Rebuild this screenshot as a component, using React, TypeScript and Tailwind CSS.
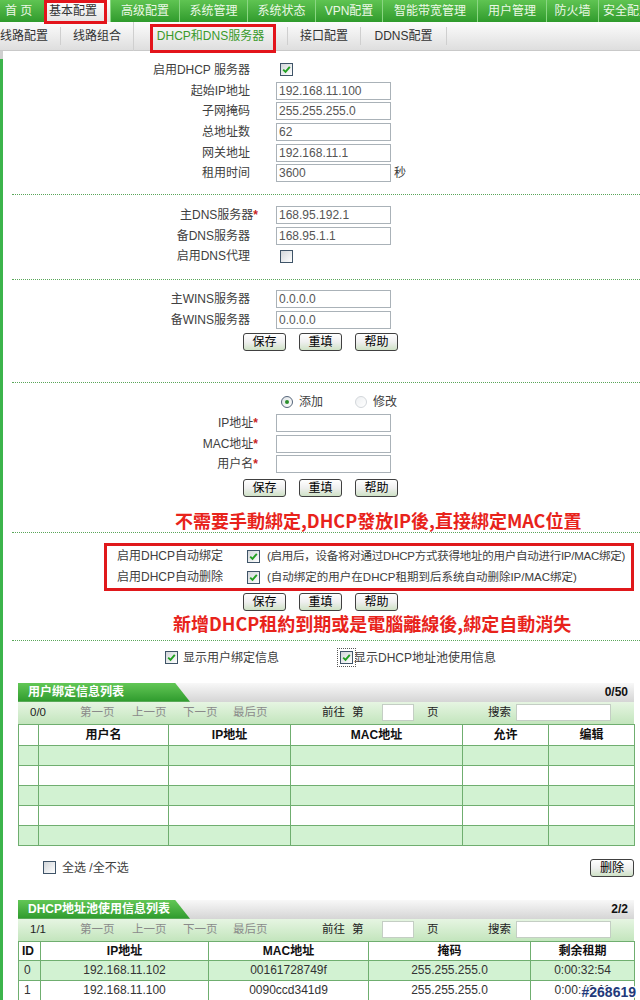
import React from "react";

function Check({ checked = true, focus = false }: { checked?: boolean; focus?: boolean }) {
  return (
    <span className={focus ? "inline-flex shrink-0 outline-1 outline-dotted outline-[#555] outline-offset-[2px]" : "inline-flex shrink-0"}>
      <span className="relative inline-block w-[13px] h-[13px] border border-[#3f5468] bg-linear-to-br from-[#d2d6da] to-white">
        {checked && (
          <svg className="absolute left-0 top-0" width="11" height="11" viewBox="0 0 11 11">
            <path d="M2.2 5.6 L4.5 7.9 L8.8 2.8" fill="none" stroke="#22a022" strokeWidth="1.9" />
          </svg>
        )}
      </span>
    </span>
  );
}

function Radio({ checked = false }: { checked?: boolean }) {
  return (
    <span
      className={
        checked
          ? "inline-flex shrink-0 items-center justify-center w-[12px] h-[12px] rounded-full border border-[#55657a] bg-linear-to-br from-[#dfe3e6] to-white"
          : "inline-flex shrink-0 items-center justify-center w-[12px] h-[12px] rounded-full border border-[#d3d7db] bg-linear-to-br from-[#eef0f2] to-white"
      }
    >
      {checked && <span className="w-[4px] h-[4px] rounded-full bg-[#2c8f2c]" />}
    </span>
  );
}

function Btn({ children, className = "" }: { children: React.ReactNode; className?: string }) {
  return (
    <span
      className={
        "inline-flex shrink-0 items-center justify-center w-[43px] h-[18px] border border-[#404040] rounded-[3px] bg-linear-to-b from-white via-[#efefef] to-[#cfe2c6] text-[12px] text-black leading-none " +
        className
      }
    >
      {children}
    </span>
  );
}

function Buttons({ className = "" }: { className?: string }) {
  return (
    <div className={"flex h-[18px] pl-[240px] gap-[13px] " + className}>
      <Btn>保存</Btn>
      <Btn>重填</Btn>
      <Btn>帮助</Btn>
    </div>
  );
}

function Box({ v = "" }: { v?: string }) {
  return (
    <div className="h-[18px] w-[115px] border border-[#aab2b8] bg-white px-[2px] text-[12px] leading-[16px] text-[#555] whitespace-nowrap">
      {v}
    </div>
  );
}

function Row({ label, star = false, children }: { label: string; star?: boolean; children?: React.ReactNode }) {
  return (
    <div className="flex items-center h-[20.7px]">
      <div className="w-[247px] shrink-0 text-right whitespace-nowrap text-[#404040]">
        {label}
        {star && <span className="text-[#c81e1e] font-bold mr-[-8px]">*</span>}
      </div>
      <div className="ml-[26px] flex items-center">{children}</div>
    </div>
  );
}

function Dots({ className = "" }: { className?: string }) {
  return <div className={"ml-[9px] border-t border-dotted border-[#5aa65a] " + className} />;
}

function TabHead({ title, count }: { title: string; count: string }) {
  return (
    <div className="flex h-[19px] bg-linear-to-b from-[#f8f8f8] to-[#d5d5d5]">
      <div className="w-[172px] shrink-0 bg-linear-to-b from-[#62c756] to-[#2c9a2c] [clip-path:polygon(0_0,157px_0,172px_100%,0_100%)] text-white font-bold text-[12px] pl-[10px] leading-[19px] whitespace-nowrap">
        {title}
      </div>
      <div className="ml-auto pr-[6px] font-bold text-[12px] leading-[19px] text-[#111]">{count}</div>
    </div>
  );
}

function Toolbar({ page }: { page: string }) {
  return (
    <div className="flex items-center h-[22px] bg-linear-to-b from-[#e6f5e2] to-[#c3e5bd] text-[11.5px] whitespace-nowrap">
      <span className="w-[62px] shrink-0 pl-[12px] text-[#222]">{page}</span>
      <span className="w-[52px] shrink-0 text-[#8a8a8a]">第一页</span>
      <span className="w-[51px] shrink-0 text-[#8a8a8a]">上一页</span>
      <span className="w-[50px] shrink-0 text-[#8a8a8a]">下一页</span>
      <span className="w-[89px] shrink-0 text-[#8a8a8a]">最后页</span>
      <span className="w-[30px] shrink-0 text-[#222]">前往</span>
      <span className="w-[30px] shrink-0 text-[#222]">第</span>
      <span className="w-[32px] h-[17px] shrink-0 bg-white border border-[#c4cec4]" />
      <span className="w-[13px] shrink-0" />
      <span className="w-[61px] shrink-0 text-[#222]">页</span>
      <span className="w-[28px] shrink-0 text-[#222]">搜索</span>
      <span className="w-[95px] h-[17px] shrink-0 bg-white border border-[#c4cec4]" />
    </div>
  );
}

const navItems: { t: string; w: string; sel?: boolean }[] = [
  { t: "首 页", w: "w-[44px] pl-[5px] text-left" },
  { t: "基本配置", w: "w-[66px] pl-[5px] text-left", sel: true },
  { t: "高级配置", w: "w-[69px] text-center" },
  { t: "系统管理", w: "w-[68px] text-center" },
  { t: "系统状态", w: "w-[68px] text-center" },
  { t: "VPN配置", w: "w-[67px] text-center" },
  { t: "智能带宽管理", w: "w-[95px] text-center" },
  { t: "用户管理", w: "w-[69px] text-center" },
  { t: "防火墙", w: "w-[52px] text-center" },
  { t: "安全配置", w: "w-[62px] pl-[4px] text-left" },
];

export default function App() {
  const td = "border border-[#6fae6f]";
  const th = "border border-[#6fae6f] font-bold text-[#111] text-center";
  return (
    <div className="relative w-[640px] h-[1000px] overflow-hidden bg-white font-['Liberation_Sans','Noto_Sans_CJK_SC',sans-serif] text-[12px] text-[#3a3a3a]">
      {/* top nav */}
      <div className="relative z-20 flex h-[22px] bg-linear-to-b from-[#5fc452] to-[#2f9b2c] whitespace-nowrap">
        {navItems.map((n, i) => (
          <div
            key={i}
            className={
              (n.sel
                ? "relative bg-linear-to-b from-white to-[#e4e4e4] text-[#333] "
                : "text-[#ecf8e6] " + (i > 0 ? "border-l border-[#8ad683] " : "")) +
              "shrink-0 h-[22px] leading-[22px] text-[12px] " +
              n.w
            }
          >
            {n.t}
            {n.sel && <span className="absolute left-0 top-0 w-[63px] h-[24px] border-[3px] border-[#e3141b]" />}
          </div>
        ))}
      </div>

      {/* sub nav */}
      <div className="relative z-10 flex h-[29px] items-center bg-linear-to-b from-[#fcfcfc] to-[#dedede] border-b border-[#c9c9c9] whitespace-nowrap text-[12px] text-[#333]">
        <div className="w-[60px] shrink-0 text-left">线路配置</div>
        <div className="w-[73px] shrink-0 text-center border-l border-[#cfcfcf]">线路组合</div>
        <div className="relative w-[154px] shrink-0 h-[29px] leading-[29px] text-center border-l border-[#cfcfcf] text-[#3a9a2a]">
          DHCP和DNS服务器
          <span className="absolute left-[16px] top-[2px] w-[126px] h-[29px] border-[3px] border-[#e3141b]" />
        </div>
        <div className="w-[73px] shrink-0 text-center border-l border-[#cfcfcf]">接口配置</div>
        <div className="w-[87px] shrink-0 text-center border-l border-r border-[#cfcfcf]">DDNS配置</div>
      </div>

      <div className="flex">
        <div className="w-[3px] shrink-0 flex flex-col">
          <div className="h-[8px] bg-[#cfcfcf]" />
          <div className="flex-1 bg-[#3cb44b]" />
        </div>

        <div className="flex-1 flex flex-col pt-[8.5px]">
          {/* section 1 */}
          <Row label="启用DHCP 服务器">
            <span className="ml-[4px] flex">
              <Check />
            </span>
          </Row>
          <Row label="起始IP地址">
            <Box v="192.168.11.100" />
          </Row>
          <Row label="子网掩码">
            <Box v="255.255.255.0" />
          </Row>
          <Row label="总地址数">
            <Box v="62" />
          </Row>
          <Row label="网关地址">
            <Box v="192.168.11.1" />
          </Row>
          <Row label="租用时间">
            <Box v="3600" />
            <span className="ml-[3px]">秒</span>
          </Row>

          <Dots className="mt-[10px]" />

          {/* section 2 */}
          <div className="mt-[10px]">
            <Row label="主DNS服务器" star>
              <Box v="168.95.192.1" />
            </Row>
            <Row label="备DNS服务器">
              <Box v="168.95.1.1" />
            </Row>
            <Row label="启用DNS代理">
              <span className="ml-[4px] flex">
                <Check checked={false} />
              </span>
            </Row>
          </div>

          <Dots className="mt-[12px]" />

          {/* section 3 */}
          <div className="mt-[9px]">
            <Row label="主WINS服务器">
              <Box v="0.0.0.0" />
            </Row>
            <Row label="备WINS服务器">
              <Box v="0.0.0.0" />
            </Row>
          </div>
          <Buttons className="mt-[3px]" />

          <Dots className="mt-[31px]" />

          {/* section 4 */}
          <div className="mt-[9px]">
            <Row label="">
              <span className="ml-[5px] flex items-center">
                <Radio checked />
                <span className="ml-[6px] text-[#404040]">添加</span>
                <span className="ml-[32px] flex">
                  <Radio />
                </span>
                <span className="ml-[6px] text-[#404040]">修改</span>
              </span>
            </Row>
            <Row label="IP地址" star>
              <Box />
            </Row>
            <Row label="MAC地址" star>
              <Box />
            </Row>
            <Row label="用户名" star>
              <Box />
            </Row>
          </div>
          <Buttons className="mt-[4px]" />

          <div className="mt-[11px] h-[24px] leading-[24px] ml-[172px] whitespace-nowrap font-['Noto_Sans_CJK_TC',sans-serif] font-bold text-[18px] text-[#e8231b]">
            不需要手動綁定,DHCP發放IP後,直接綁定MAC位置
          </div>
          <Dots />

          {/* auto bind red box */}
          <div className="mt-[10px] ml-[101px] w-[530px] border-[3px] border-[#e0181b] text-[#404040] whitespace-nowrap">
            <div className="flex items-center h-[21px]">
              <span className="ml-[10px] w-[130px] shrink-0">启用DHCP自动绑定</span>
              <Check />
              <span className="ml-[7px] text-[11.5px] tracking-[-0.25px]">(启用后，设备将对通过DHCP方式获得地址的用户自动进行IP/MAC绑定)</span>
            </div>
            <div className="flex items-center h-[21px]">
              <span className="ml-[10px] w-[130px] shrink-0">启用DHCP自动删除</span>
              <Check />
              <span className="ml-[7px] text-[11.5px]">(自动绑定的用户在DHCP租期到后系统自动删除IP/MAC绑定)</span>
            </div>
          </div>
          <Buttons className="mt-[2px]" />
          <div className="h-[24px] leading-[24px] ml-[170px] whitespace-nowrap font-['Noto_Sans_CJK_TC',sans-serif] font-bold text-[18px] text-[#e8231b]">
            新增DHCP租約到期或是電腦離線後,綁定自動消失
          </div>

          <Dots className="mt-[5px]" />

          {/* display options */}
          <div className="mt-[7px] flex items-center h-[20px] whitespace-nowrap text-[#404040]">
            <span className="ml-[162px] flex">
              <Check />
            </span>
            <span className="ml-[5px]">显示用户绑定信息</span>
            <span className="ml-[61px] flex">
              <Check focus />
            </span>
            <span className="ml-[1px]">显示DHCP地址池使用信息</span>
          </div>

          {/* table 1 */}
          <div className="mt-[15px] ml-[15px] w-[616px]">
            <TabHead title="用户绑定信息列表" count="0/50" />
            <Toolbar page="0/0" />
            <table className="w-[616px] table-fixed border-collapse text-[12px]">
              <colgroup>
                <col className="w-[20px]" />
                <col className="w-[130px]" />
                <col className="w-[122px]" />
                <col className="w-[172px]" />
                <col className="w-[86px]" />
                <col className="w-[86px]" />
              </colgroup>
              <thead>
                <tr className="h-[21px] bg-white">
                  <th className={th}></th>
                  <th className={th}>用户名</th>
                  <th className={th}>IP地址</th>
                  <th className={th}>MAC地址</th>
                  <th className={th}>允许</th>
                  <th className={th}>编辑</th>
                </tr>
              </thead>
              <tbody>
                {[0, 1, 2, 3, 4].map((r) => (
                  <tr key={r} className={r % 2 === 0 ? "h-[20px] bg-[#d2f2d2]" : "h-[20px] bg-white"}>
                    <td className={td}></td>
                    <td className={td}></td>
                    <td className={td}></td>
                    <td className={td}></td>
                    <td className={td}></td>
                    <td className={td}></td>
                  </tr>
                ))}
              </tbody>
            </table>
          </div>

          {/* select all */}
          <div className="mt-[12px] w-[631px] flex items-center h-[20px] whitespace-nowrap text-[#404040]">
            <span className="ml-[40px] flex">
              <Check checked={false} />
            </span>
            <span className="ml-[6px]">全选 /全不选</span>
            <Btn className="ml-auto w-[44px]">删除</Btn>
          </div>

          {/* table 2 */}
          <div className="relative mt-[22px] ml-[15px] w-[616px]">
            <TabHead title="DHCP地址池使用信息列表" count="2/2" />
            <Toolbar page="1/1" />
            <table className="w-[616px] table-fixed border-collapse text-[12px]">
              <colgroup>
                <col className="w-[22px]" />
                <col className="w-[168px]" />
                <col className="w-[160px]" />
                <col className="w-[162px]" />
                <col className="w-[104px]" />
              </colgroup>
              <thead>
                <tr className="h-[19px] bg-white">
                  <th className="border border-[#6fae6f] font-bold text-[#111] text-left pl-[3px]">ID</th>
                  <th className={th}>IP地址</th>
                  <th className={th}>MAC地址</th>
                  <th className={th}>掩码</th>
                  <th className={th}>剩余租期</th>
                </tr>
              </thead>
              <tbody className="text-[#333]">
                <tr className="h-[20px] bg-[#d2f2d2]">
                  <td className="border border-[#6fae6f] pl-[5px]">0</td>
                  <td className={td + " text-center"}>192.168.11.102</td>
                  <td className={td + " text-center"}>00161728749f</td>
                  <td className={td + " text-center"}>255.255.255.0</td>
                  <td className={td + " text-center"}>0:00:32:54</td>
                </tr>
                <tr className="h-[20px] bg-white">
                  <td className="border border-[#6fae6f] pl-[5px]">1</td>
                  <td className={td + " text-center"}>192.168.11.100</td>
                  <td className={td + " text-center"}>0090ccd341d9</td>
                  <td className={td + " text-center"}>255.255.255.0</td>
                  <td className={td + " text-center"}>0:00:46:11</td>
                </tr>
              </tbody>
            </table>
            <span className="absolute -right-[2px] bottom-[-2px] z-10 text-[14px] font-bold text-[#23397a] font-['Liberation_Sans',sans-serif] [text-shadow:1px_1px_0_#fff,-1px_-1px_0_#fff,1px_-1px_0_#fff,-1px_1px_0_#fff]">
              #268619
            </span>
          </div>
        </div>
      </div>
    </div>
  );
}
